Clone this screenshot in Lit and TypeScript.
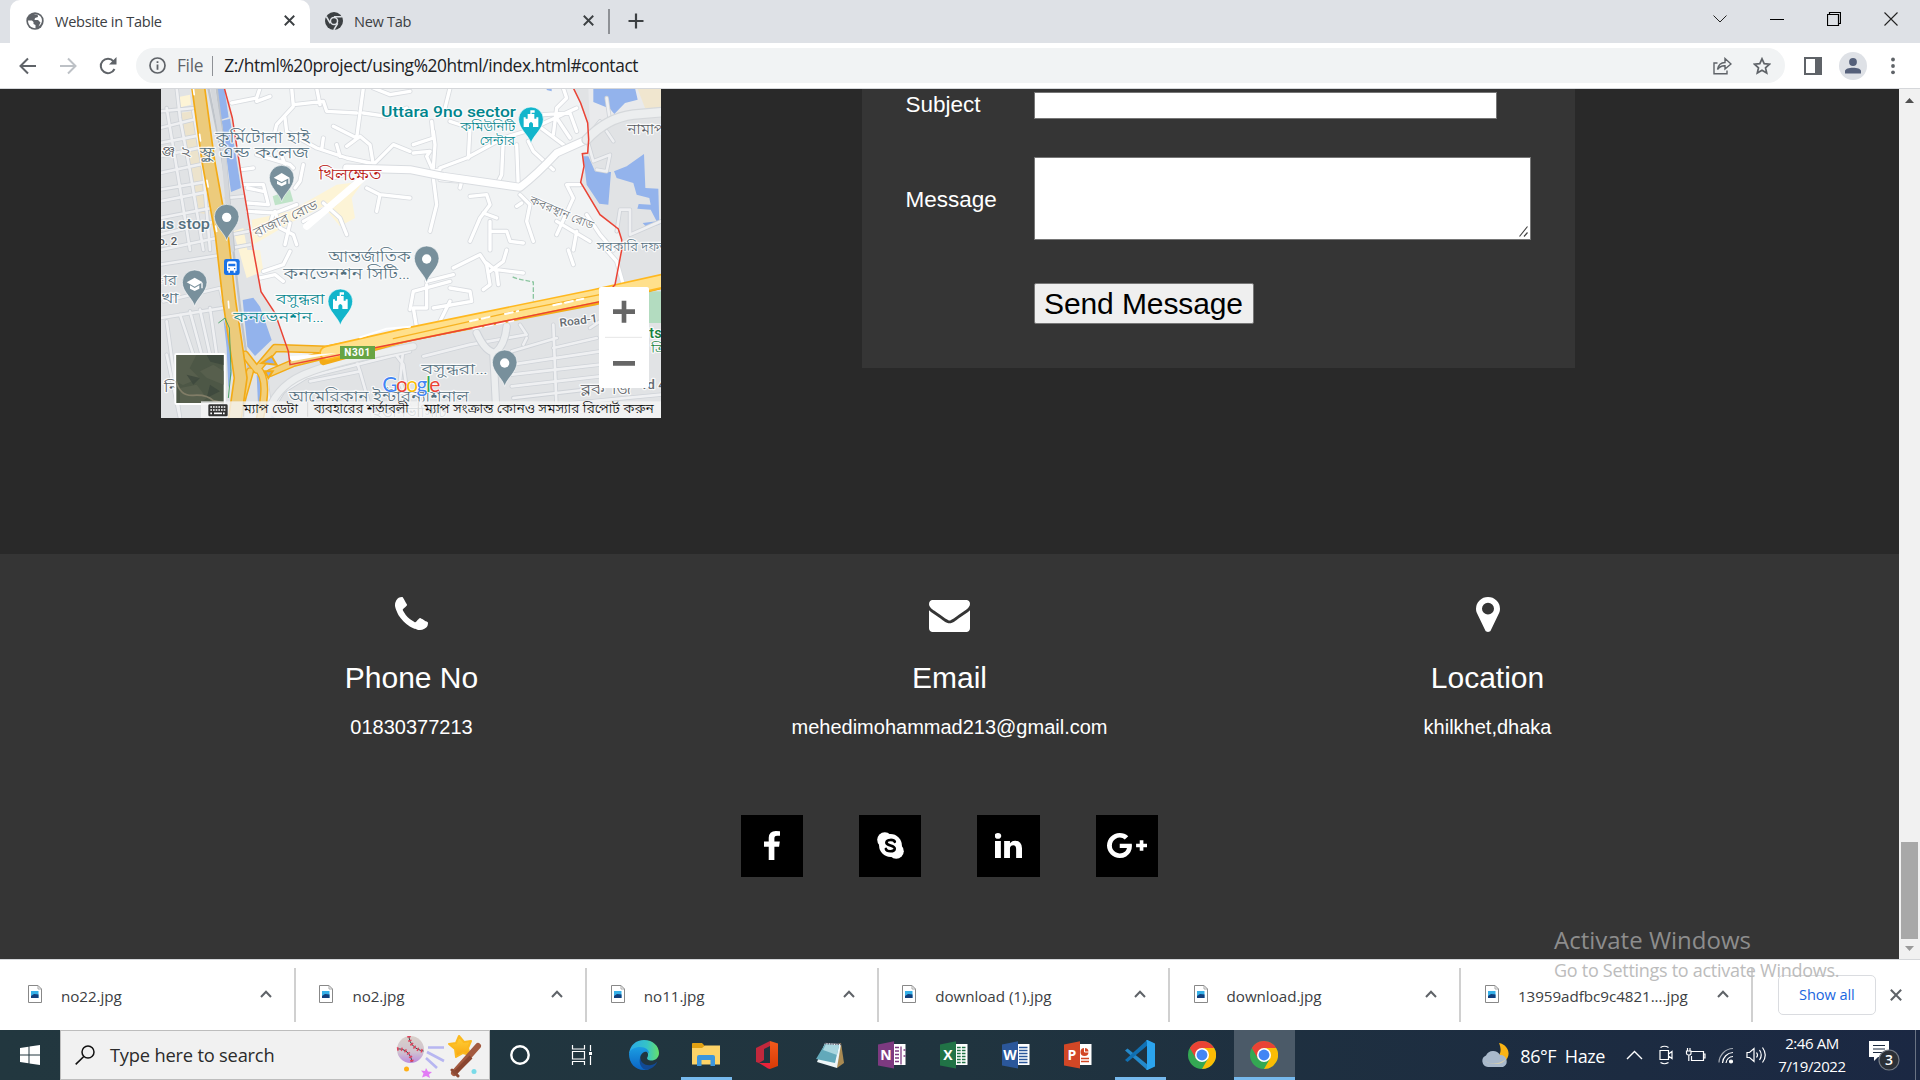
import { LitElement, html, svg, css } from "lit";
import { customElement } from "lit/decorators.js";

type Label = [string, number, number, number, number, string, string?, number?];

/* Minor streets, on a grid of three units per CSS pixel. */
const STREETS = [
  "M215 45L290 30L300 0M290 40L330 25M395 0L400 55L350 110L345 130M400 50L490 40L500 70L590 75M470 0L480 50M600 75L610 0M600 75L590 150L520 115M610 75L680 85L740 60",
  "M375 90L380 130L470 180L560 210L630 225M485 185L490 150M540 205L530 170M560 175L600 145L630 170L640 230M640 0L690 20L750 10M640 230L700 170L750 190M400 240L390 230L290 200M375 230L360 190",
  "M245 245L280 240M250 290L310 290L325 350L262 345M262 300L310 310M262 370L345 375L410 350M340 375L330 410L300 440M390 405L375 470M345 370L360 420L400 440L410 470M430 400L520 350L600 270",
  "M490 345L540 390L560 440M430 230L420 280L405 300M520 270L580 250L640 240M620 300L660 320L750 330M660 320L650 370",
  "M840 245L820 250L800 205L810 190L760 195M820 240L825 170L820 130M760 170L820 150L815 100M870 0L860 40L850 80M925 210L930 120L870 100M1010 290L1025 260L1030 150L920 210L840 240",
  "M1070 170L1075 300M1030 150L1095 130M1105 160L1120 190L1180 245M1150 80L1230 75L1250 130M1180 140L1190 60L1220 30L1210 0M1120 120L1250 60M1130 110L1210 170M1190 90L1230 150",
  "M900 300L905 280L840 275M820 270L830 350L810 430M930 325L980 320L990 350L960 390L930 460M970 375L1010 390M990 430L1040 430L1050 460L1090 465M990 400L990 486M1080 320L1110 350L1100 400L1120 460M1085 345L1070 355",
  "M1220 290L1240 330L1190 440M1220 290L1260 290M1250 430L1240 486M1190 400L1290 460M1280 380L1320 440L1360 486",
  "M800 590L800 660L760 660L770 720M870 600L930 610L935 640L820 660M800 580L880 560M880 540L960 500L980 530L990 590L970 605M980 525L1010 550L1015 590M1010 545L1090 555M1040 486L1030 520L990 550M1340 486L1370 520L1390 590",
  "M310 550L370 530L390 490M300 570L345 560L370 580M1225 486L1240 530M750 665L760 610L870 580M830 720L870 640"
];

const GREY_STREETS = [
  "M0 120L120 90M0 165L130 140M0 205L135 175M0 255L140 225M0 305L145 280M0 340L150 310M0 390L155 360M0 440L165 400M0 486L170 450M50 0L60 90L90 250L130 486M20 60L60 300L90 486M100 70L130 250L150 486M0 70L105 60",
  "M200 330L250 325M215 440L265 430M215 480L270 470M0 530L190 500M10 640L180 600L190 640M0 690L190 660M20 700L60 990M60 680L100 800M90 670L125 800M120 665L150 800M150 660L170 800M20 800L60 990",
  "M320 880L330 960M320 990L370 910L500 830L700 790M430 870L750 790M450 880L600 850L640 990M600 850L590 820M700 790L730 830L740 900M730 780L720 880L750 960",
  "M790 805L930 770L1100 740L1080 710M1055 790L1190 750M1055 830L1320 790M1055 860L1320 830M1055 895L1320 865M1060 930L1320 900M1180 710L1190 970M1290 720L1320 700M1100 750L1090 770M1180 780L1310 750M1190 950L1503 920M1210 980L1400 950",
  "M1320 100L1280 150L1300 220L1350 200L1340 250L1310 245M1370 430L1380 365L1410 365L1410 440M1410 440L1503 400M1340 130L1360 160M1350 100L1340 30"
];

const POI = "#54707f", TEAL = "#00858d", ROAD = "#666c72";
/* text, x, y, width, size, fill, anchor, rotation */
const LABELS: Label[] = [
  ["কুর্মিটোলা হাই", 450, 164, 284, 47, POI, "end"],
  ["স্কুল এন্ড কলেজ", 447, 211, 328, 47, POI, "end"],
  ["ঞ্জ  ২", 3, 205, 90, 44, "#55595e"],
  ["খিলক্ষেত", 476, 275, 188, 48, "#b81410"],
  ["বাজার রোড", 288, 448, 208, 40, ROAD, "start", -25],
  ["us stop", -10, 423, 160, 44, POI],
  ["o. 2", -5, 472, 57, 34, "#55595e"],
  ["Uttara 9no sector", 1068, 88, 405, 46, TEAL, "end"],
  ["কমিউনিটি", 1066, 130, 165, 39, TEAL, "end"],
  ["সেন্টার", 1065, 171, 106, 39, TEAL, "end"],
  ["নামাপ", 1402, 137, 112, 42, "#55595e"],
  ["কবরস্থান রোড", 1106, 345, 205, 36, ROAD, "start", 23],
  ["সরকারি দফত", 1310, 489, 215, 38, POI],
  ["আন্তর্জাতিক", 753, 521, 248, 47, POI, "end"],
  ["কনভেনশন সিটি…", 750, 574, 380, 47, POI, "end"],
  ["ার", -12, 592, 62, 44, POI],
  ["খা", 3, 645, 52, 44, POI],
  ["বসুন্ধরা", 494, 648, 147, 45, TEAL, "end"],
  ["কনভেনশন…", 492, 701, 272, 45, TEAL, "end"],
  ["নি", 12, 912, 45, 42, "#55595e"],
  ["বসুন্ধরা…", 784, 857, 200, 45, POI],
  ["আমেরিকান ইন্টারন্যাশনাল", 386, 942, 540, 47, POI],
  ["ইউনিভার্সিটি", 640, 987, 220, 42, POI],
  ["Road-1", 1200, 716, 114, 34, ROAD, "start", -7],
  ["ts", 1468, 750, 37, 42, "#14803c"],
  ["ত্রি", 1474, 794, 40, 38, "#14803c"],
  ["ব্লক 'জি'", 1262, 918, 160, 42, "#55595e"],
  ["rd 4", 1448, 902, 70, 36, ROAD]
];
const isLatin = (t: string) => /^[\x20-\x7e]+$/.test(t);

const pin = (x: number, y: number, fill: string, glyph: unknown) => svg`
  <g transform="translate(${x} ${y})">
    <path d="M0 108C-6 84-37 65-37 36A37 37 0 1 1 37 36C37 65 6 84 0 108Z" fill=${fill} stroke="#fff" stroke-opacity=".6" stroke-width="3"/>
    ${glyph}
  </g>`;
const dot = svg`<circle cx="0" cy="38" r="14" fill="#fff"/>`;
const cap = svg`<path d="M-24 36L0 22L24 36L0 49ZM-14 45L0 53L14 45V55L0 62L-14 55ZM20 38h4v16h-4z" fill="#fff"/>`;
const hall = svg`<path d="M-22 30H-16V34H-10V20H-2V9H11V16H2V20H10V34H16V30H22V59H6V49Q0 39-6 49V59H-22Z" fill="#fff"/>`;

@customElement("area-map")
class AreaMap extends LitElement {
  static styles = css`
    :host { display: block; width: 500px; height: 329px; }
    svg { display: block; }
    text { font-family: "Roboto", "Noto Sans Bengali", "Noto Sans", sans-serif; font-weight: 300; }
    .latin { font-weight: 500; }
    .shield { font-weight: 700; }
    .halo { paint-order: stroke; stroke: #fff; stroke-width: 7px; stroke-opacity: .8; stroke-linejoin: round; }
    .road { fill: none; stroke-linejoin: round; stroke-linecap: round; }
    .logo { font-family: "Lato", "Open Sans", sans-serif; font-weight: 400; font-size: 63px; paint-order: stroke; stroke: #fff; stroke-width: 4px; }
  `;
  render() {
    return html`<svg width="500" height="329" viewBox="3 3 1500 987">
      <rect width="1510" height="1000" fill="#f1f3f4"/>
      <path d="M0 0H193L217 90L245 270L262 370L280 486L303 611L345 675L385 790L390 830L750 758L1320 641L1365 590L1385 486V455L1375 423L1320 380L1262 283L1272 235L1267 197L1286 195V155L1283 105L1240 0H1510V1000H0Z" fill="#e1e3e5"/>
      <path d="M1285 0H1503V66L1380 80L1290 130Z" fill="#e9eaec"/>
      <path d="M52 28L90 20L93 50L55 60ZM62 75L100 70L150 380L115 370L90 230ZM275 395L390 370L530 290L610 280L575 330L585 390L540 415L490 355L400 400L280 470ZM220 430L250 420L262 486L300 486L310 550L260 570Z" fill="#fdf4d6"/>
      <path d="M62 75L100 70L150 380L118 375L90 230Z" fill="#ece3cc"/>
      <path d="M1432 0H1503V62L1455 60Z" fill="#f0e6cf"/>
      <path d="M338 325L390 305L400 340L345 352Z" fill="#bfe3c8"/>
      <path d="M1466 610H1503V705H1466Z" fill="#b3dcc0"/>
      <g fill="#93b3ec">
        <path d="M170 0H193L206 88L180 96ZM185 98L210 92L243 300L213 312Z"/>
        <path d="M248 636L280 629L300 656L335 756L285 804L262 776Z"/>
        <path d="M190 690L205 740L215 860L205 900L200 780ZM290 860L310 880L315 930L295 970ZM305 990Q300 975 330 978L345 990Z"/>
        <path d="M1300 0H1425L1433 35L1395 45L1363 78L1350 62L1300 42ZM1160 0H1175V10L1160 6ZM1270 205L1285 205L1305 250L1353 252L1345 350L1318 347L1280 290ZM1362 250L1400 235L1452 198L1456 300L1495 302L1498 410L1460 418L1448 405L1490 400L1472 365L1432 362L1436 348L1472 350L1468 330L1430 320L1420 285L1370 270Z"/>
      </g>
      <g class="road" stroke="#cfd3d8" stroke-width="13">${GREY_STREETS.map(d => svg`<path d=${d}/>`)}</g>
      <g class="road" stroke="#eff0f2" stroke-width="8">${GREY_STREETS.map(d => svg`<path d=${d}/>`)}</g>
      <g class="road" stroke="#d9dce0" stroke-width="15">${STREETS.map(d => svg`<path d=${d}/>`)}</g>
      <g class="road" stroke="#fff" stroke-width="10">${STREETS.map(d => svg`<path d=${d}/>`)}</g>
      <g class="road">
        <path d="M560 240L750 245L850 265L1080 298Q1130 260 1190 195L1280 155" stroke="#d9dce0" stroke-width="27"/>
        <path d="M440 415L620 260M560 240L750 245L850 265L1080 298Q1130 260 1190 195L1280 155" stroke="#fff" stroke-width="21"/>
        <path d="M1280 155Q1340 90 1420 80L1510 72" stroke="#d5d8db" stroke-width="32"/>
        <path d="M1280 155Q1340 90 1420 80L1510 72" stroke="#eceeef" stroke-width="25"/>
        <path d="M950 735Q975 790 1005 795Q1035 770 1040 715M1000 795L1010 990" stroke="#cfd3d8" stroke-width="25"/>
        <path d="M950 735Q975 790 1005 795Q1035 770 1040 715M1000 795L1010 990" stroke="#eceeef" stroke-width="19"/>
        <path d="M320 990Q340 900 430 860T760 775" stroke="#d5d8db" stroke-width="25"/>
        <path d="M320 990Q340 900 430 860T760 775" stroke="#eceeef" stroke-width="19"/>
        <path d="M145 0L180 170L205 330L220 486L245 700L265 840L250 990M170 0L195 200L222 486" stroke="#bfc4ca" stroke-width="7"/>
        <path d="M158 0L190 190L215 486" stroke="#d4d7db" stroke-width="14"/>
        <path d="M255 800L290 845L345 780L500 785L1510 590M270 850L230 990M290 840Q330 870 300 990M500 800L400 825L330 855" stroke="#f3ab16" stroke-width="25"/>
        <path d="M255 800L290 845L345 780L500 785L1510 590M270 850L230 990M290 840Q330 870 300 990M500 800L400 825L330 855" stroke="#f2cf7c" stroke-width="16"/>
        <path d="M115 0L145 220L185 440L208 640L232 800L242 870L225 990" stroke="#f3ab16" stroke-width="43"/>
        <path d="M115 0L145 220L185 440L208 640L232 800L242 870L225 990" stroke="#eccb7c" stroke-width="33"/>
        <path d="M100 0L130 220L170 430M205 640L215 760" stroke="#fff" stroke-width="5" stroke-dasharray="20 120"/>
        <path d="M490 820L750 748L1300 642L1510 590" stroke="#f3ab16" stroke-width="23"/>
        <path d="M500 795L750 738L1300 625L1510 578" stroke="#ffb81f" stroke-width="44"/>
        <path d="M500 795L750 738L1300 625L1510 578" stroke="#ffe08c" stroke-width="34"/>
        <path d="M700 752L1050 673L1350 614" stroke="#f7b221" stroke-width="4"/>
        <path d="M930 700L1000 684M1035 678L1075 669M1180 652L1270 632M940 722L1060 698" stroke="#fff" stroke-width="6" stroke-dasharray="24 12"/>
        <path d="M600 748L680 722L750 716" stroke="#fff" stroke-width="6"/>
      </g>
      <path d="M305 825L335 805L350 830ZM315 850L338 850L325 870Z" fill="#93b3ec" stroke="#f3ab16" stroke-width="6"/>
      <path d="M385 805L530 795L395 820Z" fill="#fff"/>
      <g fill="none">
        <path d="M193 0L217 90L245 270L262 370L280 486L303 611L345 675L385 790L390 830L750 758L1320 641L1365 590L1385 486V455L1375 423L1320 380L1262 283L1272 235L1267 197L1283 195L1286 155L1283 105L1262 45L1240 0" stroke="#ea4335" stroke-width="4.5"/>
        <path d="M1058 567L1075 573L1120 582V640" stroke="#8cc6a0" stroke-width="4" stroke-dasharray="14 6"/>
        <path d="M175 705L195 690L208 720L213 850L205 930" stroke="#4da66a" stroke-width="3"/>
      </g>
      ${LABELS.map(([t, x, y, w, s, fill, anchor, rot]) => svg`<text class=${isLatin(t) ? "halo latin" : "halo"} x=${x} y=${y} font-size=${s} fill=${fill}
        text-anchor=${anchor ?? "start"} textLength=${w} lengthAdjust="spacingAndGlyphs"
        transform="rotate(${rot ?? 0} ${x} ${y})">${t}</text>`)}
      ${pin(365, 233, "#78909c", cap)}
      ${pin(200, 350, "#78909c", dot)}
      ${pin(104, 547, "#78909c", cap)}
      ${pin(800, 475, "#78909c", dot)}
      ${pin(1034, 787, "#78909c", dot)}
      ${pin(1113, 58, "#12b5cb", hall)}
      ${pin(541, 604, "#12b5cb", hall)}
      <rect x="192" y="513" width="47" height="48" rx="7" fill="#1a73e8"/>
      <path d="M201 526q0-6 6-6h17q6 0 6 6v22h-4v6h-5v-6h-11v6h-5v-6h-4zM205 527v8h21v-8zM205 540v4h4v-4zM222 540v4h4v-4z" fill="#fff" fill-rule="evenodd"/>
      <rect x="540" y="774" width="105" height="39" fill="#67a444"/>
      <text class="shield" x="592" y="804" font-size="30" fill="#fff" text-anchor="middle" textLength="78">N301</text>
      <text class="logo" x="667" y="912" textLength="174"><tspan fill="#4285f4">G</tspan><tspan fill="#ea4335">o</tspan><tspan fill="#fbbc04">o</tspan><tspan fill="#4285f4">g</tspan><tspan fill="#34a853">l</tspan><tspan fill="#ea4335">e</tspan></text>
      <rect x="43" y="795" width="154" height="156" rx="7" fill="#fff"/>
      <rect x="49" y="801" width="142" height="144" fill="#4d5746"/>
      <path d="M49 801h60l-20 40l30 30l-50 20l-20-10zM120 850l40-20l31 20v40l-50-20zM60 900l50-10l30 40l-20 15h-60z" fill="#5b6350" opacity=".7"/>
      <path d="M140 801h51v30l-40-10zM80 860l40 10l-20 20zM150 890l30 20l-40 20z" fill="#39443a" opacity=".7"/>
      <path d="M49 880Q60 925 100 922T160 938L191 945" stroke="#817d67" stroke-width="5" fill="none"/>
      <rect x="123" y="940" width="1380" height="50" fill="#f5f5f5" opacity=".8"/>
      <path d="M250 942v44M443 942v44M775 942v44" stroke="#d8d8d8" stroke-width="3"/>
      <rect x="145" y="949" width="58" height="36" rx="4" fill="#333"/>
      <path d="M151 957h46M151 966h46M151 976h8M189 976h8" stroke="#fff" stroke-width="5" stroke-dasharray="5 3"/>
      <path d="M162 976h24" stroke="#fff" stroke-width="5"/>
      <g font-size="37" fill="#000">
        <text x="250" y="974" textLength="164" lengthAdjust="spacingAndGlyphs">ম্যাপ ডেটা</text>
        <text x="461" y="974" textLength="285" lengthAdjust="spacingAndGlyphs">ব্যবহারের শর্তাবলী</text>
        <text x="793" y="974" textLength="688" lengthAdjust="spacingAndGlyphs">ম্যাপ সংক্রান্ত কোনও সমস্যার রিপোর্ট করুন</text>
      </g>
      <rect x="1317" y="597" width="150" height="303" rx="6" fill="#fff"/>
      <path d="M1335 748h111" stroke="#e6e6e6" stroke-width="3"/>
      <path d="M1359 671h66M1392 638v66M1359 826h66" stroke="#666" stroke-width="14"/>
    </svg>`;
  }
}

const chromeLogo = (s: number) => html`<svg width=${s} height=${s} viewBox="0 0 48 48">
  <circle cx="24" cy="24" r="24" fill="#34a853"/>
  <path d="M3.2 12A24 24 0 0 1 44.8 12H24L13.6 30Z" fill="#ea4335"/>
  <path d="M44.8 12A24 24 0 0 1 24 48L34.4 30L24 12Z" fill="#fbbc05"/>
  <circle cx="24" cy="24" r="12" fill="#fff"/><circle cx="24" cy="24" r="9.3" fill="#4285f4"/></svg>`;

const officeLogo = (letter: string, c: string, art: unknown) => html`<svg width="28" height="28" viewBox="0 0 28 28">
  <rect x="14" y="3" width="13.5" height="21" fill="#fff"/>${art}
  <path d="M0 3.4L16 .2V27.6L0 24.4Z" fill=${c}/>
  <text x="8" y="19" font-size="14" font-weight="700" font-family="Open Sans, sans-serif" fill="#fff" text-anchor="middle">${letter}</text></svg>`;

const TASKS: { art: unknown; state: string }[] = [
  { state: "", art: html`<svg width="22" height="22" viewBox="0 0 22 22"><circle cx="11" cy="11" r="8.7" fill="none" stroke="#fff" stroke-width="2.4"/></svg>` },
  { state: "", art: html`<svg width="22" height="22" viewBox="0 0 22 22" fill="none" stroke="#fff" stroke-width="1.2"><path d="M1.5 1v4h12V1M1.5 21v-3.5h12V21M1.5 7.5h12v7.5h-12zM19.5 1v6M19.5 12v9"/><path d="M18 8h3v3h-3z" fill="#fff" stroke="none"/></svg>` },
  { state: "", art: html`<svg width="30" height="30" viewBox="0 0 30 30">
      <defs><linearGradient id="ea" x1="0" x2="1"><stop offset="0" stop-color="#2aa9e8"/><stop offset=".6" stop-color="#35c3c7"/><stop offset="1" stop-color="#66e06a"/></linearGradient>
      <linearGradient id="eb" x1="0" y1="0" x2="0" y2="1"><stop offset="0" stop-color="#1b9de2"/><stop offset="1" stop-color="#0b64c4"/></linearGradient></defs>
      <path d="M0 14C1 5 7 0 15 0C24 0 30 6 30 13C30 18 26 20.5 22.5 20.5C19 20.5 17.5 19 18.3 17.5C20.5 14 18 9 12 9C6 9 1 12 0 14Z" fill="url(#ea)"/>
      <path d="M0 14C1 9 6 7 11 7C17 7 20 10 20 13.5C19 12 17.5 11.5 16 11.7C11 13 9 20 14 25C17 28 20 28 21 28.5C19 29.7 17 30 15 30C6 30 0 23 0 14Z" fill="url(#eb)"/>
      <path d="M11.5 17C11 23 17 26 22 25C25 24.5 27 23 28.5 21.5C26.5 26 22 30 16.5 29.8C11 28 9.5 21 11.5 17Z" fill="#124a94"/></svg>` },
  { state: "open", art: html`<svg width="28" height="26" viewBox="0 0 28 26"><path d="M0 1.5Q0 1 1 1H10L13 4H27Q28 4 28 5V22H0Z" fill="#e2a112"/><path d="M0 6H10L13 3.5H28V22.5H0Z" fill="#fdd367"/><path d="M5 24V15Q5 13 7 13H21Q23 13 23 15V24H18.5V18H9.5V24Z" fill="#3d96dc"/></svg>` },
  { state: "", art: html`<svg width="23" height="28" viewBox="0 0 23 28"><defs><linearGradient id="of" x1="0" x2="0" y1="0" y2="1"><stop offset="0" stop-color="#f25a1b"/><stop offset="1" stop-color="#d73a06"/></linearGradient></defs><path d="M0 7L14 0V5L8 8V19L3 22L0 21Z" fill="#c2283c"/><path d="M14 0L22 2.5V25L14 28Z" fill="url(#of)"/><path d="M3 22H14V28L12 27.5Z" fill="#e8223a"/></svg>` },
  { state: "", art: html`<svg width="30" height="28" viewBox="0 0 30 28"><path d="M23 3L26 2L29 22L22 27Z" fill="#a98a52"/><path d="M10 2L26 3L22 27L2 21Z" fill="#eef6f8"/><path d="M10 3L24 4.5L20 22L1 18Z" fill="#62a9ba"/><path d="M11 3L24 4.5L22 14L8 9Z" fill="#a9d6df"/><path d="M10 2.5L26 3.5" stroke="#667" stroke-width="1.5" stroke-dasharray="1.5 1"/></svg>` },
  { state: "", art: officeLogo("N", "#7d3a80", svg`<path d="M17 6.5h4M17 10h4M17 13.5h4M17 17h4M17 20.5h4" stroke="#7d3a80" stroke-width="1.5"/><path d="M23 5.5v18M25.5 9h2M25.5 15h2" stroke="#7d3a80" stroke-width="1.3"/>`) },
  { state: "", art: officeLogo("X", "#217346", svg`<path d="M17 6.5h8.5M17 9.5h8.5M17 12.5h8.5M17 15.5h8.5M17 18.5h8.5M17 21.5h8.5" stroke="#217346" stroke-width="1.7"/><path d="M21.3 5v18" stroke="#fff" stroke-width="1.2"/>`) },
  { state: "", art: officeLogo("W", "#2b579a", svg`<path d="M17 6.5h8.5M17 9.5h8.5M17 12.5h8.5M17 15.5h8.5M17 18.5h8.5M17 21.5h8.5" stroke="#2b579a" stroke-width="1.5"/>`) },
  { state: "", art: officeLogo("P", "#d24726", svg`<circle cx="20.5" cy="11" r="4" fill="#d24726"/><path d="M20.5 11V6.5M20.5 11h4.5" stroke="#fff" stroke-width="1"/><path d="M17 17.5h8M17 20.5h8" stroke="#d24726" stroke-width="1.5"/>`) },
  { state: "open", art: html`<svg width="31" height="30" viewBox="0 0 31 30"><path d="M1 10.5L3.5 8.5L24 25V30L22 29Z" fill="#2489ca"/><path d="M1 20L3.5 22L24 5V0L22 1Z" fill="#1070b3"/><path d="M22 0.5L23.5 0L31 3.5V26.5L23.5 30L22 29.5L23 28V2Z" fill="#2ba4ee"/></svg>` },
  { state: "", art: chromeLogo(28) },
  { state: "open active", art: chromeLogo(28) }
];

const FILES = ["no22.jpg", "no2.jpg", "no11.jpg", "download (1).jpg", "download.jpg", "13959adfbc9c4821....jpg"];

const fa = (w: number, h: number, box: string, d: string) => html`<svg width=${w} height=${h} viewBox=${box} preserveAspectRatio="none" fill="#fff"><path d=${d}/></svg>`;

const CONTACTS = [
  { title: "Phone No", text: "01830377213", icon: fa(33, 33, "192 128 1408 1408", "M1600 1240q0 27-10 70.5t-21 68.5q-21 50-122 106-94 51-186 51-27 0-53-3.5t-57.5-12.5-47-14.5-55.5-20.5-49-18q-98-35-175-83-127-79-264-216t-216-264q-48-77-83-175-3-9-18-49t-20.5-55.5-14.5-47-12.5-57.5-3.5-53q0-92 51-186 56-101 106-122 25-11 68.5-21t70.5-10q14 0 21 3 18 6 53 76 11 19 30 54t35 63.5 31 53.5q3 4 17.5 25t21.5 35.5 7 28.5q0 20-28.5 50t-62 55-62 53-28.5 46q0 9 5 22.5t8.5 20.5 14 24 11.5 19q76 137 174 235t235 174q2 1 19 11.5t24 14 20.5 8.5 22.5 5q18 0 46-28.5t53-62 55-62 50-28.5q14 0 28.5 7t35.5 21.5 25 17.5q25 15 53.5 31t63.5 35 54 30q70 35 76 53 3 7 3 21z"), cls: "" },
  { title: "Email", text: "mehedimohammad213@gmail.com", icon: fa(41, 32, "0 256 1792 1408", "M1792 710v794q0 66-47 113t-113 47h-1472q-66 0-113-47t-47-113v-794q44 49 101 87 362 246 497 345 57 42 92.5 65.5t94.5 48 110 24.5h2q51 0 110-24.5t94.5-48 92.5-65.5q170-123 498-345 57-39 100-87zm0-294q0 79-49 151t-122 123q-376 261-468 325-10 7-42.5 31t-54 38.5-52 32.5-57.5 27-50 9h-2q-23 0-50-9t-57.5-27-52-32.5-54-38.5-42.5-31q-91-64-262-182.5t-205-142.5q-62-42-117-115.5t-55-136.5q0-78 41.5-130t118.5-52h1472q65 0 112.5 47t47.5 113z"), cls: "low" },
  { title: "Location", text: "khilkhet,dhaka", icon: fa(24, 35, "384 128 1024 1536", "M1152 640q0-106-75-181t-181-75-181 75-75 181 75 181 181 75 181-75 75-181zm256 0q0 109-33 179l-364 774q-16 33-47.5 52t-67.5 19-67.5-19-46.5-52l-365-774q-33-70-33-179 0-212 150-362t362-150 362 150 150 362z"), cls: "" }
];

const SOCIAL = [
  fa(16, 29, "479 0 864 1664", "M1343 12v264h-157q-86 0-116 36t-30 108v189h293l-39 296h-254v759h-306v-759h-255v-296h255v-218q0-186 104-288.5t277-102.5q147 0 228 12z"),
  html`<svg width="27" height="27" viewBox="0 0 27 27"><circle cx="7.8" cy="7.8" r="7.6" fill="#fff"/><circle cx="19.2" cy="19.2" r="7.6" fill="#fff"/><circle cx="13.5" cy="13.5" r="11.4" fill="#fff"/><path d="M17.8 9.8C17 7.5 9.8 7 9.4 10.5C9.2 14.3 18 12.6 17.7 16.7C17.2 20.3 9.7 19.8 8.9 17" fill="none" stroke="#000" stroke-width="2.7" stroke-linecap="round"/></svg>`,
  fa(27, 25, "147 148 1517 1468", "M477 625v991h-330v-991h330zm21-306q1 73-50.5 122t-135.5 49h-2q-82 0-132-49t-50-122q0-74 51.5-122.5t134.5-48.5 133 48.5 51 122.5zm1166 729v568h-329v-530q0-105-40.5-164.5t-126.5-59.5q-63 0-105.5 34.5t-63.5 85.5q-11 30-11 81v553h-329q2-399 2-647t-1-296l-1-48h329v144h-2q20-32 41-56t56.5-52 87-43.5 114.5-15.5q171 0 275 113.5t104 332.5z"),
  fa(40, 25, "0 163 2304 1466", "M1437 913q0 208-87 370.5t-248 254-369 91.5q-149 0-285-58t-234-156-156-234-58-285 58-285 156-234 234-156 285-58q286 0 491 192l-199 191q-117-113-292-113-123 0-227.5 62t-165.5 168.5-61 232.5 61 232.5 165.5 168.5 227.5 62q83 0 152.5-23t114.5-57.5 78.5-78.5 49-83 21.5-74h-416v-252h692q12 63 12 122zm867-122v210h-209v209h-210v-209h-209v-210h209v-209h210v209h209z")
];

const cross = (s: number, w: number, c: string) => html`<svg width=${s} height=${s} viewBox="0 0 10 10"><path d="M.7.7L9.3 9.3M9.3.7L.7 9.3" stroke=${c} stroke-width=${w} fill="none"/></svg>`;

@customElement("app-root")
class AppRoot extends LitElement {
  static styles = css`
    :host { display: flex; flex-direction: column; width: 1920px; height: 1080px; overflow: hidden; position: relative;
      font-family: "Open Sans", "Noto Sans", sans-serif; color: #3c4043; background: #fff; }
    * { box-sizing: border-box; }
    svg { display: block; flex: none; }
    .tabs { height: 43px; background: #dee1e6; display: flex; align-items: flex-end; padding-left: 10px; flex: none; }
    .tab { height: 43px; display: flex; align-items: center; font-size: 14.6px; letter-spacing: -.32px; white-space: nowrap; padding-bottom: 2px; }
    .tab span { flex: 1; margin-left: 11px; }
    .first { width: 300px; background: #fff; border-radius: 10px 10px 0 0; padding-left: 16px; padding-right: 15px; }
    .second { width: 298px; padding-left: 15px; padding-right: 14px; }
    .rule { width: 2px; height: 25px; background: #8e9196; margin-bottom: 9px; }
    .plus { margin: 0 0 14px 18px; }
    .win { margin-left: auto; align-self: flex-start; display: flex; align-items: center; height: 37px; padding-right: 22px; gap: 43px; }
    .bar { height: 46px; border-bottom: 1px solid #d5d7da; display: flex; align-items: center; padding-left: 19px; flex: none; }
    .bar > svg { margin-right: 22px; }
    .bar > .reload { margin-right: 19px; }
    .omni { width: 1649px; height: 35px; border-radius: 18px; background: #f1f3f4; display: flex; align-items: center; padding: 0 14px 0 13px; font-size: 17.3px; }
    .file { margin-left: 11px; color: #5f6368; letter-spacing: -.3px; }
    .sep { width: 1px; height: 20px; background: #8e9196; margin: 0 11px 0 9px; }
    .url { flex: 1; color: #202124; letter-spacing: -.37px; }
    .omni .share { margin-right: 21px; }
    .avatar { width: 28px; height: 28px; border-radius: 50%; background: #dee1e6; display: flex; align-items: center; justify-content: center; margin: 0 24px 0 17px; }
    .bar > .panel { margin: 0 0 0 19px; }
    .bar > .dots { margin: 0; }
    .view { height: 870px; display: flex; flex: none; }
    .page { width: 1899px; background: #292929; font-family: "Liberation Sans", Arial, sans-serif; color: #fff; display: flex; flex-direction: column; }
    .top { height: 465px; display: flex; padding-left: 161px; align-items: flex-start; }
    .form { margin-left: 201px; width: 713px; height: 279px; background: #353535; padding: 3px 0 0 43.5px; display: grid; grid-template-columns: 128px 1fr;
      grid-template-rows: 27px 83px 41px; row-gap: 38px; align-items: center; justify-items: start; font-size: 22.5px; }
    .form input { width: 463px; height: 27px; border: 1px solid #767676; background: #fff; padding: 0; }
    .subject { padding-bottom: 2px; }
    .message { padding-top: 2px; }
    .form .area { width: 497px; height: 83px; border: 1px solid #767676; background: #fff; display: flex; justify-content: flex-end; align-items: flex-end; padding: 2px; }
    .send { width: 220px; height: 41px; margin-top: 10px; border: 1px solid #767676; border-radius: 2px; background: #efefef; font: 30px "Liberation Sans", Arial, sans-serif; color: #000; padding: 0; grid-column: 2; letter-spacing: -.1px; }
    .foot { height: 405px; background: #353535; padding-top: 43px; }
    .contacts { display: grid; grid-template-columns: repeat(3, 538px); padding-left: 142.5px; }
    .contact { display: flex; flex-direction: column; align-items: center; }
    .ico { height: 63px; }
    .low { padding-top: 3px; }
    .title { font-size: 30px; line-height: 36px; height: 52px; }
    .detail { font-size: 20px; line-height: 30px; }
    .social { display: flex; gap: 55.9px; margin-top: 73px; padding-left: 740.5px; }
    .sq { width: 62.5px; height: 62px; background: #000; display: flex; align-items: center; justify-content: center; padding-bottom: 1px; }
    .scroll { width: 21px; background: #f1f1f1; display: flex; flex-direction: column; align-items: center; padding: 9px 0 8px; }
    .thumb { width: 17px; height: 97px; background: #a8a8a8; margin-top: auto; margin-bottom: 7px; }
    .shelf { height: 71px; border-top: 1px solid #d5d7da; background: #fff; display: flex; align-items: center; flex: none; padding: 0 0 1px 4.5px; }
    .dl { width: 291.4px; height: 54px; border-right: 2px solid #d0d0d0; display: flex; align-items: center; padding: 0 22px 0 23.5px; font-size: 15.2px; letter-spacing: -.05px; }
    .dl span { flex: 1; margin-left: 19px; white-space: nowrap; padding-top: 2px; }
    .dl svg { margin-top: -1px; }
    .all { width: 98px; height: 40px; margin-left: 25px; border: 1px solid #dadce0; border-radius: 5px; display: flex; align-items: center; justify-content: center; color: #1a66e0; font-size: 14.6px; letter-spacing: -.1px; margin-right: 14px; padding-bottom: 2px; }
    .task { height: 50px; background: linear-gradient(90deg, #22373f 0%, #20343f 50%, #1c2b41 85%, #1b2843 100%); display: flex; align-items: center; flex: none; color: #fff; }
    .start { width: 60px; padding-left: 20px; }
    .search { width: 430px; height: 50px; border: 1px solid #bdbdbd; background: #f1f1f1; color: #2b2b2b; display: flex; align-items: center; padding: 0 3px 0 14px; font-size: 18.3px; letter-spacing: -.2px; }
    .search span { margin-left: 15px; flex: 1; padding-bottom: 1px; }
    .app { width: 61px; margin-right: 1px; height: 50px; display: flex; align-items: center; justify-content: center; position: relative; padding-right: 2px; }
    .open::after { content: ""; position: absolute; left: 5px; right: 5px; bottom: 0; height: 3px; background: #76b9ed; }
    .active { background: #4b5a68; }
    .active::after { left: 0; right: 0; }
    .tray { margin-left: auto; display: flex; align-items: center; }
    .temp { font-size: 18px; margin: 0 21px 0 11px; letter-spacing: -.4px; white-space: pre; padding-top: 2px; }
    .tray > svg { margin-right: 12px; }
    .tray > .moon { margin: 0; }
    .tray > .up { margin-right: 14px; }
    .tray > .cam { margin-right: 11px; }
    .clock { width: 70px; text-align: center; font-size: 15px; letter-spacing: -.4px; line-height: 23px; margin-right: 22px; margin-left: -2px; white-space: nowrap; }
    .edge { width: 1px; height: 50px; background: #6a7383; margin-right: 4px; }
    .mark { position: absolute; left: 1554px; top: 922px; color: #8d8d8d; pointer-events: none; white-space: nowrap; }
    .mark b { display: block; font-weight: 400; font-size: 24px; line-height: 36px; letter-spacing: 0; }
    .mark i { display: block; font-style: normal; font-size: 18px; line-height: 24px; color: #bcbcbc; letter-spacing: -.28px; }
  `;

  render() {
    return html`
      <div class="tabs">
        <div class="tab first">
          <svg width="18" height="18" viewBox="0 0 18 18"><circle cx="9" cy="9" r="8.7" fill="#5f6368"/><path d="M2 8.5L6 8.5L7.5 10V12L9.5 13V16.3C5 16 2 13 2 8.5ZM8 2.5L11.5 2.2L12 5L9 6L8.5 8H12L14.5 10.5L12.5 14.5C16 12.5 17 8 14.8 4.8C13 2.5 10.5 1.7 8 2.5Z" fill="#fff"/></svg>
          <span>Website in Table</span>${cross(11, 1.7, "#3c4043")}
        </div>
        <div class="tab second">
          <svg width="18" height="18" viewBox="0 0 48 48"><circle cx="24" cy="24" r="24" fill="#3c4043"/><circle cx="24" cy="24" r="9.5" fill="#3c4043" stroke="#dee1e6" stroke-width="4"/><path d="M24 12.5H45M14 30L3.5 12M34 30L23.5 48" stroke="#dee1e6" stroke-width="4"/></svg>
          <span>New Tab</span>${cross(11, 1.7, "#3c4043")}
        </div>
        <div class="rule"></div>
        <svg class="plus" width="16" height="16" viewBox="0 0 16 16"><path d="M8 .5V15.5M.5 8H15.5" stroke="#3c4043" stroke-width="2.2"/></svg>
        <div class="win">
          <svg width="14" height="8" viewBox="0 0 14 8"><path d="M.5 .5L7 7L13.5 .5" stroke="#222" fill="none"/></svg>
          <svg width="14" height="14" viewBox="0 0 14 14"><path d="M0 7.5H14" stroke="#000"/></svg>
          <svg width="14" height="14" viewBox="0 0 14 14"><path d="M.5 2.5h11v11h-11zM2.5 2.5v-2h11v11h-2" stroke="#000" fill="none" stroke-width="1.2"/></svg>
          <svg width="14" height="14" viewBox="0 0 14 14"><path d="M.5.5L13.5 13.5M13.5.5L.5 13.5" stroke="#222" stroke-width="1.1"/></svg>
        </div>
      </div>
      <div class="bar">
        <svg width="18" height="18" viewBox="0 0 18 18"><path d="M17 9H2M9 1.5L1.5 9L9 16.5" fill="none" stroke="#5f6368" stroke-width="2"/></svg>
        <svg width="18" height="18" viewBox="0 0 18 18"><path d="M1 9H16M9 1.5L16.5 9L9 16.5" fill="none" stroke="#bdc1c6" stroke-width="2"/></svg>
        <svg class="reload" width="18" height="18" viewBox="0 0 18 18"><path d="M15.5 12A7.2 7.2 0 1 1 14.5 4.3" fill="none" stroke="#5f6368" stroke-width="2"/><path d="M17.5 0V7.5H10Z" fill="#5f6368"/></svg>
        <div class="omni">
          <svg width="17" height="17" viewBox="0 0 17 17"><circle cx="8.5" cy="8.5" r="7.5" fill="none" stroke="#5f6368" stroke-width="1.7"/><path d="M8.5 7.5V12.7M8.5 4.2V6" stroke="#5f6368" stroke-width="1.8"/></svg>
          <span class="file">File</span><div class="sep"></div><span class="url">Z:/html%20project/using%20html/index.html#contact</span>
          <svg class="share" width="19" height="18" viewBox="0 0 19 18"><path d="M4.5 6H1V16.7H14V13.5M4.5 12.5C5.5 7 8.5 5.5 12 5.5V1.5L18 7L12 12V8.7C8.5 8.5 6.5 9.5 4.5 12.5Z" fill="none" stroke="#5f6368" stroke-width="1.4"/></svg>
          <svg width="18" height="18" viewBox="0 0 18 18"><path d="M9 1.8L11.2 6.7L16.5 7.2L12.5 10.8L13.7 16L9 13.2L4.3 16L5.5 10.8L1.5 7.2L6.8 6.7Z" fill="none" stroke="#5f6368" stroke-width="1.7"/></svg>
        </div>
        <svg class="panel" width="18" height="18" viewBox="0 0 18 18"><path d="M1 1H17V17H1Z" fill="#fff" stroke="#5f6368" stroke-width="2"/><path d="M11 1H17V17H11Z" fill="#5f6368"/></svg>
        <div class="avatar"><svg width="16" height="16" viewBox="0 0 16 16"><circle cx="8" cy="4" r="3.9" fill="#55607a"/><path d="M0 15.5V13C0 8.5 16 8.5 16 13V15.5Z" fill="#55607a"/></svg></div>
        <svg class="dots" width="4" height="18" viewBox="0 0 4 18" fill="#5f6368"><circle cx="2" cy="2.5" r="1.9"/><circle cx="2" cy="9" r="1.9"/><circle cx="2" cy="15.3" r="1.9"/></svg>
      </div>
      <div class="view">
        <div class="page">
          <div class="top">
            <area-map></area-map>
            <div class="form">
              <label class="subject">Subject</label><input type="text">
              <label class="message">Message</label>
              <div class="area"><svg width="9" height="11" viewBox="0 0 9 11"><path d="M.5 10.5L8.5 .5M5 10.5L8.5 6.5" stroke="#444" stroke-width="1.2"/></svg></div>
              <button class="send">Send Message</button>
            </div>
          </div>
          <div class="foot">
            <div class="contacts">${CONTACTS.map(c => html`<div class="contact"><div class="ico ${c.cls}">${c.icon}</div><div class="title">${c.title}</div><div class="detail">${c.text}</div></div>`)}</div>
            <div class="social">${SOCIAL.map(s => html`<div class="sq">${s}</div>`)}</div>
          </div>
        </div>
        <div class="scroll">
          <svg width="9" height="5" viewBox="0 0 9 5"><path d="M0 5L4.5 0L9 5Z" fill="#505050"/></svg>
          <div class="thumb"></div>
          <svg width="9" height="5" viewBox="0 0 9 5"><path d="M0 0L4.5 5L9 0Z" fill="#9a9a9a"/></svg>
        </div>
      </div>
      <div class="shelf">
        ${FILES.map(f => html`<div class="dl">
          <svg width="14" height="18" viewBox="0 0 14 18"><path d="M.5.5H10L13.5 4V17.5H.5Z" fill="#fff" stroke="#888"/><path d="M10 .5V4H13.5" fill="none" stroke="#aaa"/><path d="M3 6H10.5V13H3Z" fill="#35b0e8"/><path d="M3 11L6 9L10.5 9.5V13H3Z" fill="#123f7d"/></svg>
          <span>${f}</span>
          <svg width="12" height="8" viewBox="0 0 12 8"><path d="M1 7L6 1.7L11 7" fill="none" stroke="#5f6368" stroke-width="2"/></svg></div>`)}
        <div class="all">Show all</div>${cross(12, 1.7, "#5f6368")}
      </div>
      <div class="task">
        <div class="start"><svg width="20" height="20" viewBox="0 0 20 20" fill="#fff"><path d="M0 3L8.5 1.7V9.5H0ZM9.5 1.5L20 0V9.5H9.5ZM0 10.5H8.5V18.3L0 17ZM9.5 10.5H20V20L9.5 18.5Z"/></svg></div>
        <div class="search">
          <svg width="20" height="20" viewBox="0 0 20 20"><circle cx="13" cy="7" r="6" fill="none" stroke="#111" stroke-width="1.5"/><path d="M8.8 11.5L.7 19.4" stroke="#111" stroke-width="1.6"/></svg>
          <span>Type here to search</span>
          <svg width="90" height="46" viewBox="0 0 90 46">
            <defs><linearGradient id="bb" x1="0" y1="0" x2="0" y2="1"><stop offset="0" stop-color="#d9d0c9"/><stop offset=".6" stop-color="#cfc2cf"/><stop offset="1" stop-color="#bb8be0"/></linearGradient>
            <linearGradient id="st" x1="0" y1="0" x2="0" y2="1"><stop offset="0" stop-color="#ffd23a"/><stop offset="1" stop-color="#f9a60f"/></linearGradient></defs>
            <circle cx="14.5" cy="17.500" r="13.5" fill="url(#bb)"/>
            <path d="M13 4C13 12 20 18 27.5 19M1 17C9 16 15 22 16 30" fill="none" stroke="#444" stroke-width="1"/>
            <path d="M13 4C13 12 20 18 27.5 19M1 17C9 16 15 22 16 30" fill="none" stroke="#e4435e" stroke-width="3.5" stroke-dasharray="1.5 2.5"/>
            <path d="M32 15.5L48 15.5M31 20L48 29M30 26L41 36" stroke="#a9a8f2" stroke-width="2.6" opacity=".8"/>
            <path d="M63 4L68 10L75 9L72 16L74 23L67 21L60 25L59 17L53 12L60 11Z" fill="url(#st)" stroke="#fbb91f" stroke-width="2" stroke-linejoin="round"/>
            <path d="M82 14L58 41" stroke="#a35a40" stroke-width="6" stroke-linecap="round"/><path d="M75 25L59 41" stroke="#8a452f" stroke-width="4"/><path d="M56 38L62 44" stroke="#8d4b35" stroke-width="3" stroke-linecap="round"/>
            <circle cx="10.5" cy="37" r="2.5" fill="#ffb016"/><circle cx="78" cy="39.5" r="2.5" fill="#7adbe8"/>
            <path d="M30 36L32 39.5L36 40L33 42.5L34 46L30 44L26 45.5L27.5 41.5L25 38.5L29 39Z" fill="#e27bf5"/>
          </svg>
        </div>
        ${TASKS.map(t => html`<div class="app ${t.state}">${t.art}</div>`)}
        <div class="tray">
          <svg class="moon" width="27" height="26" viewBox="0 0 27 26"><path d="M17 1C27 3 30 14 22 20L12 18C19 14 20 8 17 1Z" fill="#fbb414"/><path d="M6 25A6 6 0 0 1 4 13.5A8 8 0 0 1 18 13A6.3 6.3 0 0 1 21 25Z" fill="#a9b9cb"/><path d="M3 19Q13 25 24 17Q21 22 14 22T3 19Z" fill="#d8cfae"/></svg>
          <span class="temp">86°F  Haze</span>
          <svg class="up" width="17" height="10" viewBox="0 0 17 10"><path d="M1 9L8.5 1.5L16 9" fill="none" stroke="#fff" stroke-width="1.4"/></svg>
          <svg class="cam" width="17" height="20" viewBox="0 0 17 20" fill="none" stroke="#fff" stroke-width="1.2"><path d="M3 5.5h8.5v9H3zM11.5 9l3.500-2.500v7L11.5 11M3.5 2.500Q7.5 0 11.5 2.500M3.5 17.5Q7.5 20 11.5 17.5"/></svg>
          <svg width="21" height="16" viewBox="0 0 21 16" fill="none" stroke="#fff" stroke-width="1.2"><path d="M6 4.5H18.5V13.5H6.5V9M18.5 7H20V11H18.5M2.5 1V4M5 1V4M1.5 4H6V6.5Q6 8 3.8 8T1.5 6.5ZM3.8 8V14"/></svg>
          <svg width="16" height="17" viewBox="0 0 16 17" fill="none" stroke="#fff" stroke-width="1.2"><path d="M1 15.5A14.5 14.5 0 0 1 15 1.5" opacity=".6"/><path d="M4.5 16A11 11 0 0 1 15 5.5M8 16A7.5 7.5 0 0 1 15 9.5"/><circle cx="13" cy="14.5" r="1.5" fill="#fff"/></svg>
          <svg width="21" height="18" viewBox="0 0 21 18" fill="none" stroke="#fff" stroke-width="1.2"><path d="M1 6.5H3.5L8 2.5V15.5L3.5 11.5H1ZM10.5 6.5Q12.5 9 10.5 11.5M13.5 4Q17 9 13.5 14"/><path d="M16.5 1.5Q22 9 16.5 16.5"/></svg>
          <div class="clock">2:46 AM<br>7/19/2022</div>
          <svg class="note" width="34" height="32" viewBox="0 0 34 32"><path d="M0 2H20V18H9L5 22V18H0Z" fill="#fff"/><path d="M4 6.5H16M4 10H16M4 13.5H16" stroke="#1c2b41" stroke-width="1.2"/><circle cx="20" cy="21" r="10" fill="#2b3037" stroke="#747a84" stroke-width="1.2"/><text x="20" y="26" text-anchor="middle" font-size="14" font-weight="600" fill="#fff">3</text></svg>
          <div class="edge"></div>
        </div>
      </div>
      <div class="mark"><b>Activate Windows</b><i>Go to Settings to activate Windows.</i></div>
    `;
  }
}
